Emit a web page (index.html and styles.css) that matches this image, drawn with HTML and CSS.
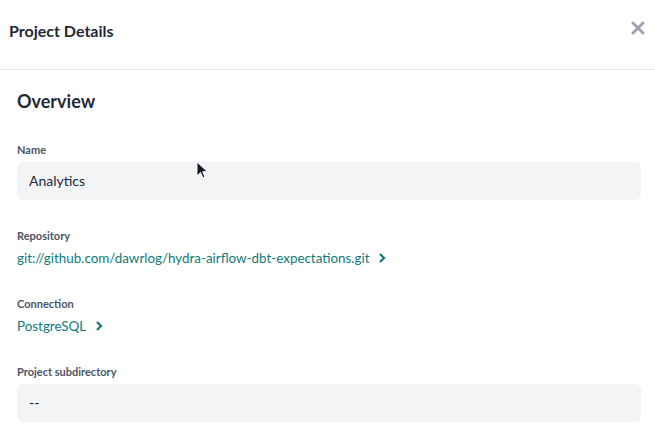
FILE: index.html
```html
<!DOCTYPE html>
<html>
<head>
<meta charset="utf-8">
<link rel="stylesheet" href="styles.css">
</head>
<body>
<div class="panel">
  <header class="header">
    <h1 class="title">Project Details</h1>
    <button class="close" aria-label="Close">
      <svg width="14" height="14" viewBox="0 0 14 14"><path d="M2 2 L12 12 M12 2 L2 12" stroke="#9ca3af" stroke-width="3" stroke-linecap="round"/></svg>
    </button>
  </header>
  <main class="content">
    <h2 class="section-title">Overview</h2>
    <div class="field">
      <div class="label">Name</div>
      <div class="box">Analytics</div>
    </div>
    <div class="field">
      <div class="label">Repository</div>
      <a class="link" href="#">git://github.com/dawrlog/hydra-airflow-dbt-expectations.git<svg class="chev" width="8" height="12" viewBox="0 0 8 12"><path d="M2 2 L6 6 L2 10" fill="none" stroke="currentColor" stroke-width="2.2"/></svg></a>
    </div>
    <div class="field">
      <div class="label">Connection</div>
      <a class="link" href="#">PostgreSQL<svg class="chev" width="8" height="12" viewBox="0 0 8 12"><path d="M2 2 L6 6 L2 10" fill="none" stroke="currentColor" stroke-width="2.2"/></svg></a>
    </div>
    <div class="field">
      <div class="label">Project subdirectory</div>
      <div class="box dim">--</div>
    </div>
  </main>
  <svg class="cursor" width="14" height="20" viewBox="0 0 14 20"><path d="M1 1 L1 15 L4.5 11.5 L7 17 L9 16 L6.7 10.7 L11.5 10.7 Z" fill="#111827" stroke="#fff" stroke-width="1"/></svg>
</div>
</body>
</html>
```

FILE: styles.css
```css
* { box-sizing: border-box; }
html, body { margin: 0; padding: 0; background: #fff; }
body { font-family: Lato, "Open Sans", sans-serif; color: #1f2937; width: 655px; height: 438px; overflow: hidden; }
.panel { position: relative; width: 655px; }
.header { height: 70px; border-bottom: 1px solid #e5e7eb; display: flex; justify-content: space-between; align-items: flex-start; padding: 20px 9px 0 9px; }
.title { margin: 0; font-size: 16px; line-height: 22px; font-weight: 700; color: #1f2937; }
.close { border: 0; background: none; padding: 0; margin: 1px 1px 0 0; width: 14px; height: 14px; display: flex; }
.content { padding: 19px 14px 0 17px; }
.section-title { margin: 0 0 29px; font-size: 18px; line-height: 24px; font-weight: 700; color: #1f2937; }
.field { margin-bottom: 28px; }
.label { font-size: 11px; line-height: 16px; font-weight: 700; color: #4b5563; margin-bottom: 4px; }
.box { height: 38px; background: #f3f4f6; border-radius: 6px; padding: 0 12px 1px; display: flex; align-items: center; font-size: 14px; color: #1f2937; }
.box.dim { color: #111827; }
.link { display: flex; width: fit-content; align-items: center; height: 20px; font-size: 13.4px; line-height: 20px; color: #0f7b78; text-decoration: none; }
.chev { margin-left: 9px; }
.cursor { position: absolute; left: 196px; top: 161px; }
```
